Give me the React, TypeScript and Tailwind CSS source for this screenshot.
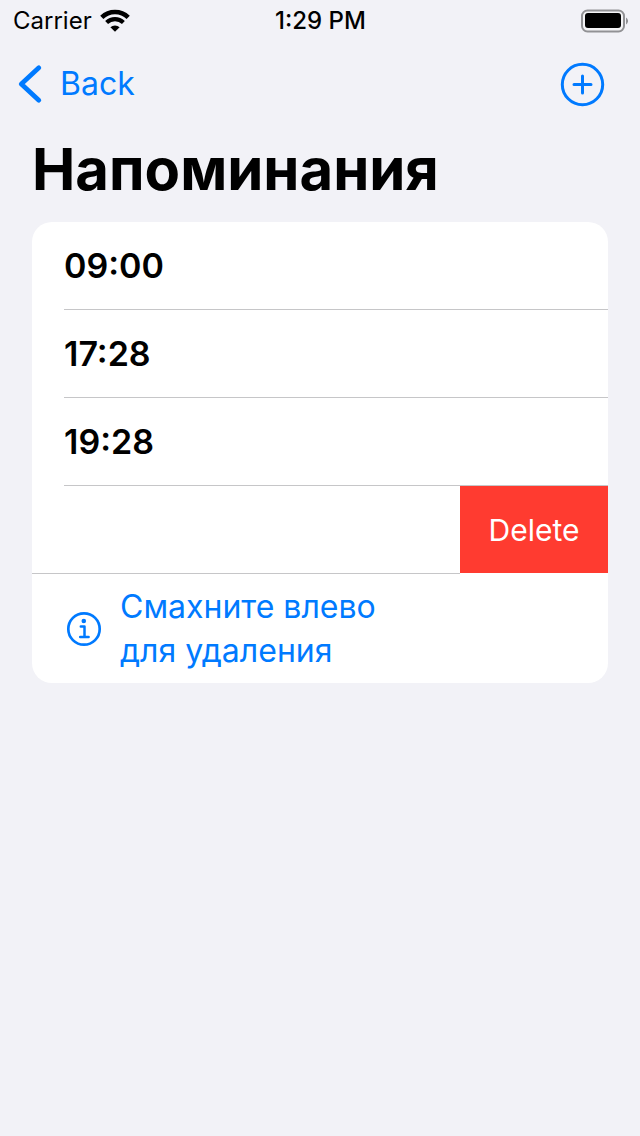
const times = ["09:00", "17:28", "19:28"];

function StatusBar() {
  return (
    <div className="grid h-10 grid-cols-3 items-center pr-3 pl-[13px] text-[24px] leading-[42px] text-black">
      <div className="flex items-center gap-[7px]">
        <span>Carrier</span>
        <svg width="32" height="24" viewBox="0 0 32 24" fill="none" aria-hidden="true">
          <path d="M2.8 8.3A19 19 0 0 1 29.2 8.3" stroke="#000" strokeWidth="4.6" />
          <path d="M7.6 13.5A12.2 12.2 0 0 1 24.4 13.5" stroke="#000" strokeWidth="4.2" />
          <path d="M11.4 18.3A6.6 6.6 0 0 1 20.6 18.3L16 22.8Z" fill="#000" />
        </svg>
      </div>
      <span className="text-center font-medium">1:29 PM</span>
      <svg className="justify-self-end" width="48" height="24" viewBox="0 0 48 24" aria-hidden="true">
        <rect x="2" y="1.5" width="42" height="21" rx="5.5" fill="#f5f5f7" stroke="#929295" strokeWidth="2" />
        <rect x="5" y="4" width="36" height="15" rx="3" fill="#000" />
        <path d="M46 8.5A4 4 0 0 1 46 15.5Z" fill="#929295" />
      </svg>
    </div>
  );
}

export default function App() {
  return (
    <div className="min-h-screen bg-[#f2f2f7] font-['Inter','Liberation_Sans',sans-serif]">
      <StatusBar />
      <header className="flex h-[88px] items-center justify-between pr-[34px] pl-4 text-[#007aff]">
        <button type="button" className="flex items-center gap-4 text-[32px] leading-[46px]">
          <svg width="28" height="40" viewBox="0 0 28 40" fill="none" stroke="currentColor" strokeWidth="4.8" strokeLinecap="round" strokeLinejoin="round" aria-hidden="true">
            <path d="M22.8 3.8 5.3 20 22.8 36.2" />
          </svg>
          Back
        </button>
        <button type="button" aria-label="Add">
          <svg width="46" height="46" viewBox="0 0 46 46" fill="none" stroke="currentColor" strokeWidth="3" strokeLinecap="round" aria-hidden="true">
            <circle cx="22.5" cy="23.5" r="20.2" />
            <path d="M14 23.5h17M22.5 15v17" />
          </svg>
        </button>
      </header>
      <main className="px-8">
        <h1 className="pt-0.5 pb-3.5 text-[58px] leading-[78px] font-bold text-black">Напоминания</h1>
        <section className="overflow-hidden rounded-[20px] bg-white">
          <ul>
            {times.map((time) => (
              <li key={time} className="ml-8 flex h-[88px] items-center border-b border-[#c6c6c8] text-[34px] font-semibold text-black">
                <time>{time}</time>
              </li>
            ))}
            <li className="flex h-[88px] justify-end">
              <div className="flex-1 border-b border-[#c6c6c8]" />
              <button type="button" className="mb-px w-[148px] bg-[#ff3b30] text-[30px] leading-10 text-white">
                Delete
              </button>
            </li>
          </ul>
          <div className="flex items-center gap-[18px] pt-[11px] pb-[10px] pl-[34px] text-[#007aff]">
            <svg width="36" height="36" viewBox="0 0 36 36" fill="none" stroke="currentColor" strokeWidth="2.7" aria-hidden="true">
              <circle cx="18" cy="18" r="15.7" />
              <circle cx="17.8" cy="10" r="2.3" fill="currentColor" stroke="none" />
              <path d="M14.8 15.6H18.5V26M14.2 26H22.6" strokeWidth="2.5" strokeLinecap="round" strokeLinejoin="round" />
            </svg>
            <p className="text-[32px] leading-[44px]">
              Смахните влево
              <br />
              для удаления
            </p>
          </div>
        </section>
      </main>
    </div>
  );
}
